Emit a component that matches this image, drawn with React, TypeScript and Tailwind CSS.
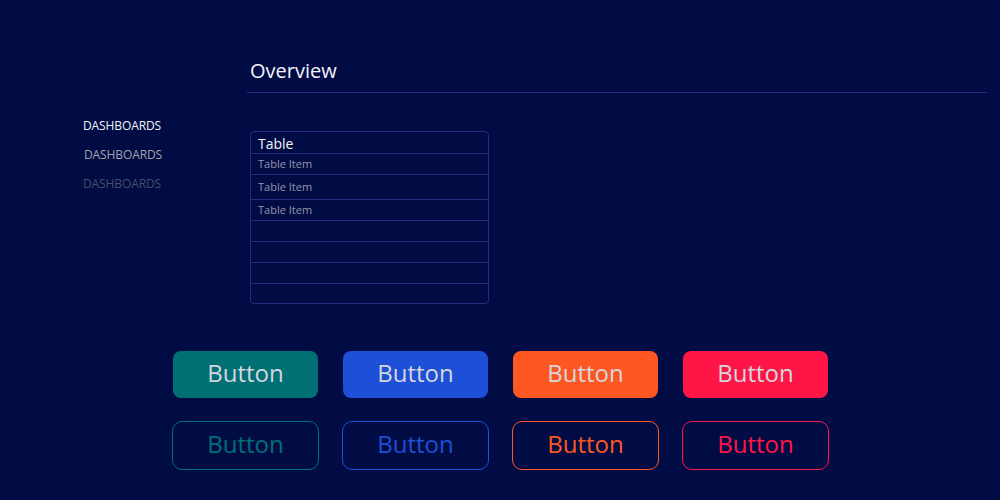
import React from "react";

const navItems = [
  { label: "DASHBOARDS", color: "text-[#f2f2f7]", pad: "" },
  { label: "DASHBOARDS", color: "text-[#a3a3ae]", pad: "pl-px" },
  { label: "DASHBOARDS", color: "text-[#4b4b66]", pad: "" },
];

const rows = [
  { text: "Table Item", h: "h-[21px]" },
  { text: "Table Item", h: "h-[25px]" },
  { text: "Table Item", h: "h-[21px]" },
  { text: "", h: "h-[21px]" },
  { text: "", h: "h-[21px]" },
  { text: "", h: "h-[21px]" },
  { text: "", h: "h-[19px]" },
];

const filled = [
  "bg-[#007074]",
  "bg-[#1d4fd7]",
  "bg-[#ff5722]",
  "bg-[#ff1546]",
];

const outlined = [
  "border-[#007074] text-[#007074]",
  "border-[#1d4fd7] text-[#1d4fd7]",
  "border-[#ff5722] text-[#ff5722]",
  "border-[#ff1546] text-[#ff1546]",
];

export default function App() {
  return (
    <div className="h-[500px] w-[1000px] overflow-hidden bg-[#010c45] font-['Open_Sans',sans-serif]">
      <div className="flex">
        {/* Sidebar */}
        <div className="w-[247px] pl-[83px] pt-[118px] flex flex-col gap-[13px]">
          {navItems.map((item, i) => (
            <div
              key={i}
              className={`text-[12px] leading-[16px] tracking-[-0.1px] ${item.color} ${item.pad}`}
            >
              {item.label}
            </div>
          ))}
        </div>

        {/* Content */}
        <div className="flex-1 pr-[13px] pt-[57px]">
          <div className="border-b border-[#2e2b7d] pb-[7px] pl-[3px]">
            <h1 className="text-[20px] leading-[28px] text-[#f4f4fa]">Overview</h1>
          </div>

          <div className="ml-[3px] mt-[38px] w-[239px] rounded-[4px] border border-[#2e2b7d]">
            <div className="flex h-[22px] items-center border-b border-[#2e2b7d] px-[7px] pt-px text-[14px] text-[#f4f4fa]">
              Table
            </div>
            {rows.map((row, i) => (
              <div
                key={i}
                className={`flex ${row.h} items-center px-[7px] pt-px text-[11px] text-[#9696a8] ${
                  i < rows.length - 1 ? "border-b border-[#2e2b7d]" : ""
                }`}
              >
                {row.text}
              </div>
            ))}
          </div>
        </div>
      </div>

      {/* Buttons */}
      <div className="mt-[47px] flex flex-col items-center gap-[23px] pl-px">
        <div className="flex gap-[25px]">
          {filled.map((c, i) => (
            <button
              key={i}
              className={`h-[47px] w-[145px] rounded-[8px] pb-[3px] text-[24px] text-[#d6d6de] ${c}`}
            >
              Button
            </button>
          ))}
        </div>
        <div className="flex gap-[23px]">
          {outlined.map((c, i) => (
            <button
              key={i}
              className={`h-[49px] w-[147px] rounded-[10px] border bg-transparent pb-[3px] text-[24px] ${c}`}
            >
              Button
            </button>
          ))}
        </div>
      </div>
    </div>
  );
}
